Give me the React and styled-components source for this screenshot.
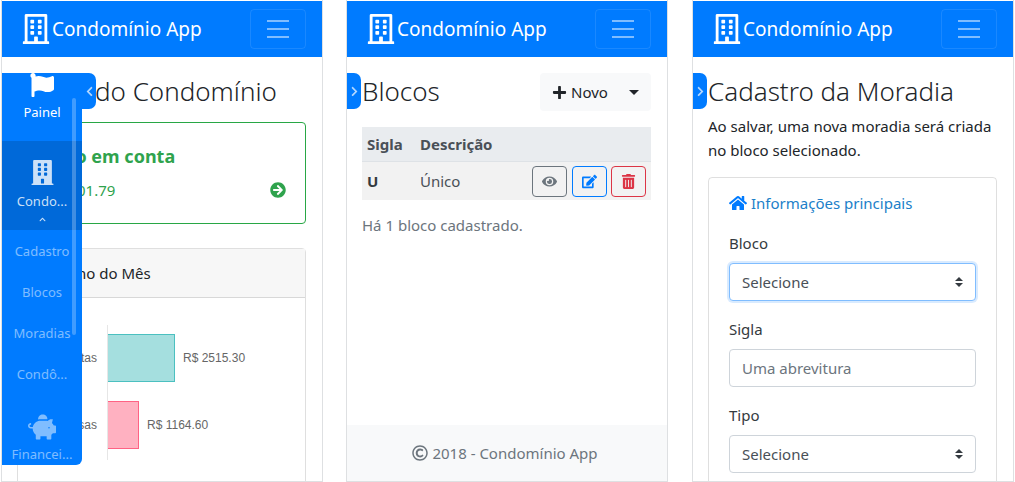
import styled, { createGlobalStyle } from "styled-components";
import {
  FaRegBuilding,
  FaBuilding,
  FaFlag,
  FaPiggyBank,
  FaHome,
  FaEye,
  FaEdit,
  FaTrashAlt,
  FaPlus,
  FaArrowCircleRight,
  FaRegCopyright,
  FaChevronLeft,
  FaChevronRight,
  FaChevronUp,
} from "react-icons/fa";

const GlobalStyle = createGlobalStyle`
  html, body {
    margin: 0;
    height: 482px;
    overflow: hidden;
    background: #fff;
    font-family: "Noto Sans", "Liberation Sans", sans-serif;
    color: #212529;
  }
  * { box-sizing: border-box; }
`;

const Page = styled.div`
  display: flex;
  gap: 23px;
  padding-left: 1px;
  height: 482px;
`;

const Phone = styled.section`
  position: relative;
  display: flex;
  flex-direction: column;
  width: 322px;
  height: 482px;
  margin-left: ${(p) => p.$shift || 0}px;
  padding-top: 1px;
  border: 1px solid #dee0e2;
  border-top: 0;
  overflow: hidden;
`;

const Navbar = styled.header`
  display: flex;
  align-items: center;
  justify-content: space-between;
  flex: none;
  height: 56px;
  padding: 0 16px 0 19px;
  background: #007bff;
  color: #fff;
`;

const Brand = styled.div`
  display: flex;
  align-items: center;
  gap: 1px;
  font-size: 19px;
  svg { font-size: 30px; margin-top: -1px; }
`;

const Toggler = styled.div`
  display: flex;
  align-items: center;
  justify-content: center;
  width: 56px;
  height: 40px;
  border: 1px solid rgba(255, 255, 255, 0.1);
  border-radius: 4px;
`;

const Main = styled.main`
  flex: 1;
  min-height: 0;
  padding: 16px 16px 0 15px;
`;

const TitleRow = styled.div`
  display: flex;
  align-items: center;
  justify-content: space-between;
  height: 38px;
`;

const Title = styled.h1`
  margin: 0 0 3px;
  font-size: 26px;
  font-weight: 300;
  white-space: nowrap;
  color: #212529;
`;

const BalanceCard = styled.div`
  margin-top: 11px;
  height: 102px;
  padding: 20px 19px 0 20px;
  border: 1px solid #28a745;
  border-radius: 4px;
  color: #2fa34d;
`;

const BalanceTitle = styled.div`
  font-size: 18px;
  font-weight: 700;
  line-height: 26px;
`;

const BalanceRow = styled.div`
  display: flex;
  align-items: center;
  justify-content: space-between;
  margin-top: 9px;
  font-size: 15px;
  line-height: 24px;
  svg { font-size: 16px; }
`;

const ChartCard = styled.div`
  margin-top: 24px;
  height: 300px;
  border: 1px solid rgba(0, 0, 0, 0.125);
  border-radius: 4px;
`;

const CardHeader = styled.div`
  height: 49px;
  padding: 0 20px;
  line-height: 49px;
  font-size: 15px;
  background: #f7f7f7;
  border-bottom: 1px solid rgba(0, 0, 0, 0.125);
`;

const Sidebar = styled.nav`
  position: absolute;
  left: 0;
  top: 73px;
  width: 80px;
  height: 392px;
  background: #007bff;
  border-radius: 0 0 6px 0;
  overflow: hidden;
`;

const SideScroll = styled.div`
  position: absolute;
  left: 70px;
  top: 25px;
  width: 4px;
  height: 237px;
  border-radius: 2px;
  background: rgba(255, 255, 255, 0.25);
`;

const SideItem = styled.div`
  display: flex;
  flex-direction: column;
  align-items: center;
  height: ${(p) => p.$height}px;
  padding-top: ${(p) => p.$top || 0}px;
  background: ${(p) => (p.$active ? "#0069d9" : "transparent")};
  color: ${(p) => (p.$active ? "rgba(255,255,255,.8)" : p.$dim ? "rgba(255,255,255,.5)" : "#fff")};
  font-size: 13px;
  line-height: 18px;
  white-space: nowrap;
  svg { flex: none; }
`;

const SubItem = styled.div`
  height: 41px;
  padding-top: 1px;
  line-height: 41px;
  text-align: center;
  font-size: 13px;
  color: rgba(255, 255, 255, 0.5);
`;

const SideLabel = styled.span`
  margin-top: ${(p) => p.$gap || 0}px;
`;

const Tab = styled.div`
  position: absolute;
  left: ${(p) => (p.$open ? 80 : 0)}px;
  top: 73px;
  display: flex;
  align-items: center;
  justify-content: ${(p) => (p.$open ? "flex-end" : "center")};
  width: 14px;
  height: 36px;
  padding-right: ${(p) => (p.$open ? 1 : 0)}px;
  background: #007bff;
  border-radius: 0 7px 7px 0;
  color: rgba(255, 255, 255, 0.7);
  font-size: 11px;
`;

const NewButton = styled.div`
  display: flex;
  align-items: center;
  width: 111px;
  height: 38px;
  padding-left: 12px;
  gap: 4px;
  background: #f8f9fa;
  border-radius: 4px;
  font-size: 15px;
  svg { font-size: 15px; }
`;

const Caret = styled.span`
  margin-left: 17px;
  border-top: 5px solid #212529;
  border-left: 5px solid transparent;
  border-right: 5px solid transparent;
`;

const Table = styled.table`
  width: 100%;
  margin-top: 16px;
  border-collapse: collapse;
  font-size: 15px;
  color: #212529;
`;

const HeadCell = styled.th`
  height: 34px;
  padding: 0 5px;
  text-align: left;
  font-weight: 700;
  background: #e9ecef;
  color: #495057;
  border-bottom: 1px solid #dee2e6;
  white-space: nowrap;
`;

const Cell = styled.td`
  height: 39px;
  padding: 1px 5px 0;
  background: #f2f2f2;
  font-weight: ${(p) => (p.$bold ? 700 : 400)};
  color: ${(p) => (p.$bold ? "#343a40" : "#495057")};
`;

const Actions = styled.div`
  display: flex;
  justify-content: flex-end;
  gap: 4.5px;
`;

const IconButton = styled.div`
  display: flex;
  align-items: center;
  justify-content: center;
  width: 35px;
  height: 31px;
  border: 1px solid ${(p) => p.$color};
  border-radius: 4px;
  color: ${(p) => p.$color};
  font-size: 15px;
`;

const Muted = styled.p`
  margin: 13px 0 0;
  font-size: 15px;
  line-height: 24px;
  color: #6c757d;
`;

const Footer = styled.footer`
  display: flex;
  align-items: center;
  justify-content: center;
  gap: 4px;
  flex: none;
  height: 56px;
  padding-right: 4px;
  background: #f8f9fa;
  color: #6c757d;
  font-size: 15px;
  svg { font-size: 16px; }
`;

const Lead = styled.p`
  margin: 3px 0 0;
  font-size: 15px;
  line-height: 24px;
`;

const FormCard = styled.div`
  margin-top: 15px;
  height: 400px;
  padding: 14px 20px 0 20px;
  border: 1px solid rgba(0, 0, 0, 0.125);
  border-radius: 4px;
`;

const SectionLink = styled.div`
  display: flex;
  align-items: center;
  gap: 4px;
  height: 21px;
  font-size: 15px;
  color: #1b7fc9;
  svg { color: #007bff; font-size: 18px; }
`;

const Field = styled.div`
  margin-top: ${(p) => p.$top || 17}px;
`;

const Label = styled.label`
  display: block;
  height: 22px;
  line-height: 22px;
  margin-bottom: 9px;
  font-size: 15px;
  color: #343a40;
`;

const Select = styled.select`
  display: block;
  width: 100%;
  height: 38px;
  padding: 0 12px;
  appearance: none;
  font: inherit;
  font-size: 15px;
  color: #495057;
  border-radius: 4px;
  border: 1px solid ${(p) => (p.$focus ? "#80bdff" : "#ced4da")};
  box-shadow: ${(p) => (p.$focus ? "0 0 0 2px rgba(0,123,255,.15)" : "none")};
  background: #fff url("data:image/svg+xml,%3Csvg xmlns='http://www.w3.org/2000/svg' viewBox='0 0 4 5'%3E%3Cpath fill='%23343a40' d='M2 0L0 2h4zm0 5L0 3h4z'/%3E%3C/svg%3E") no-repeat right 12px center / 8px 10px;
`;

const Input = styled.input`
  display: block;
  width: 100%;
  height: 38px;
  padding: 0 12px;
  font: inherit;
  font-size: 15px;
  border: 1px solid #ced4da;
  border-radius: 4px;
  &::placeholder { color: #6c757d; opacity: 1; }
`;

function Burger() {
  return (
    <svg width="30" height="30" viewBox="0 0 30 30">
      <path
        stroke="rgba(255,255,255,.5)"
        strokeWidth="2"
        d="M4 7h22M4 15h22M4 23h22"
      />
    </svg>
  );
}

function Header() {
  return (
    <Navbar>
      <Brand>
        <FaRegBuilding />
        Condomínio App
      </Brand>
      <Toggler>
        <Burger />
      </Toggler>
    </Navbar>
  );
}

function Chart() {
  const label = { fontFamily: "Liberation Sans", fontSize: 12, fill: "#666" };
  return (
    <svg width="286" height="184" viewBox="0 0 286 184">
      <rect x="89.5" y="36.5" width="67" height="47" fill="#a5dfdf" stroke="#4bc0c0" />
      <rect x="89.5" y="103.5" width="31" height="47" fill="#ffb1c1" stroke="#ff6384" />
      <path d="M89.5 27v135" stroke="#e6e6e6" />
      <text x="79" y="64" textAnchor="end" {...label}>Receitas</text>
      <text x="79" y="131" textAnchor="end" {...label}>Despesas</text>
      <text x="165" y="64" {...label}>R$ 2515.30</text>
      <text x="129" y="131" {...label}>R$ 1164.60</text>
    </svg>
  );
}

export default function App() {
  return (
    <>
      <GlobalStyle />
      <Page>
        <Phone>
          <Header />
          <Main>
            <TitleRow>
              <Title>Painel do Condomínio</Title>
            </TitleRow>
            <BalanceCard>
              <BalanceTitle>Saldo em conta</BalanceTitle>
              <BalanceRow>
                R$ 1301.79
                <FaArrowCircleRight />
              </BalanceRow>
            </BalanceCard>
            <ChartCard>
              <CardHeader>Resumo do Mês</CardHeader>
              <Chart />
            </ChartCard>
          </Main>
          <Sidebar>
            <SideItem $height={68}>
              <FaFlag size={24} />
              <SideLabel $gap={6}>Painel</SideLabel>
            </SideItem>
            <SideItem $height={89} $active $top={19}>
              <FaBuilding size={25} />
              <SideLabel $gap={7}>Condo...</SideLabel>
              <FaChevronUp size={7} style={{ marginTop: 6 }} />
            </SideItem>
            <SubItem>Cadastro</SubItem>
            <SubItem>Blocos</SubItem>
            <SubItem>Moradias</SubItem>
            <SubItem>Condô...</SubItem>
            <SideItem $height={71} $dim $top={19}>
              <FaPiggyBank size={28} />
              <SideLabel $gap={4}>Financei...</SideLabel>
            </SideItem>
            <SideScroll />
          </Sidebar>
          <Tab $open>
            <FaChevronLeft />
          </Tab>
        </Phone>

        <Phone>
          <Header />
          <Main>
            <TitleRow>
              <Title>Blocos</Title>
              <NewButton>
                <FaPlus />
                Novo
                <Caret />
              </NewButton>
            </TitleRow>
            <Table>
              <thead>
                <tr>
                  <HeadCell style={{ width: 53 }}>Sigla</HeadCell>
                  <HeadCell>Descrição</HeadCell>
                  <HeadCell />
                </tr>
              </thead>
              <tbody>
                <tr>
                  <Cell $bold>U</Cell>
                  <Cell>Único</Cell>
                  <Cell>
                    <Actions>
                      <IconButton $color="#6c757d"><FaEye /></IconButton>
                      <IconButton $color="#007bff"><FaEdit /></IconButton>
                      <IconButton $color="#dc3545"><FaTrashAlt /></IconButton>
                    </Actions>
                  </Cell>
                </tr>
              </tbody>
            </Table>
            <Muted>Há 1 bloco cadastrado.</Muted>
          </Main>
          <Footer>
            <FaRegCopyright />
            2018 - Condomínio App
          </Footer>
          <Tab>
            <FaChevronRight />
          </Tab>
        </Phone>

        <Phone $shift={1}>
          <Header />
          <Main>
            <TitleRow>
              <Title>Cadastro da Moradia</Title>
            </TitleRow>
            <Lead>Ao salvar, uma nova moradia será criada no bloco selecionado.</Lead>
            <FormCard>
              <SectionLink>
                <FaHome />
                Informações principais
              </SectionLink>
              <Field $top={19}>
                <Label>Bloco</Label>
                <Select $focus defaultValue="">
                  <option value="">Selecione</option>
                </Select>
              </Field>
              <Field>
                <Label>Sigla</Label>
                <Input placeholder="Uma abrevitura" />
              </Field>
              <Field>
                <Label>Tipo</Label>
                <Select defaultValue="">
                  <option value="">Selecione</option>
                </Select>
              </Field>
            </FormCard>
          </Main>
          <Tab>
            <FaChevronRight />
          </Tab>
        </Phone>
      </Page>
    </>
  );
}
